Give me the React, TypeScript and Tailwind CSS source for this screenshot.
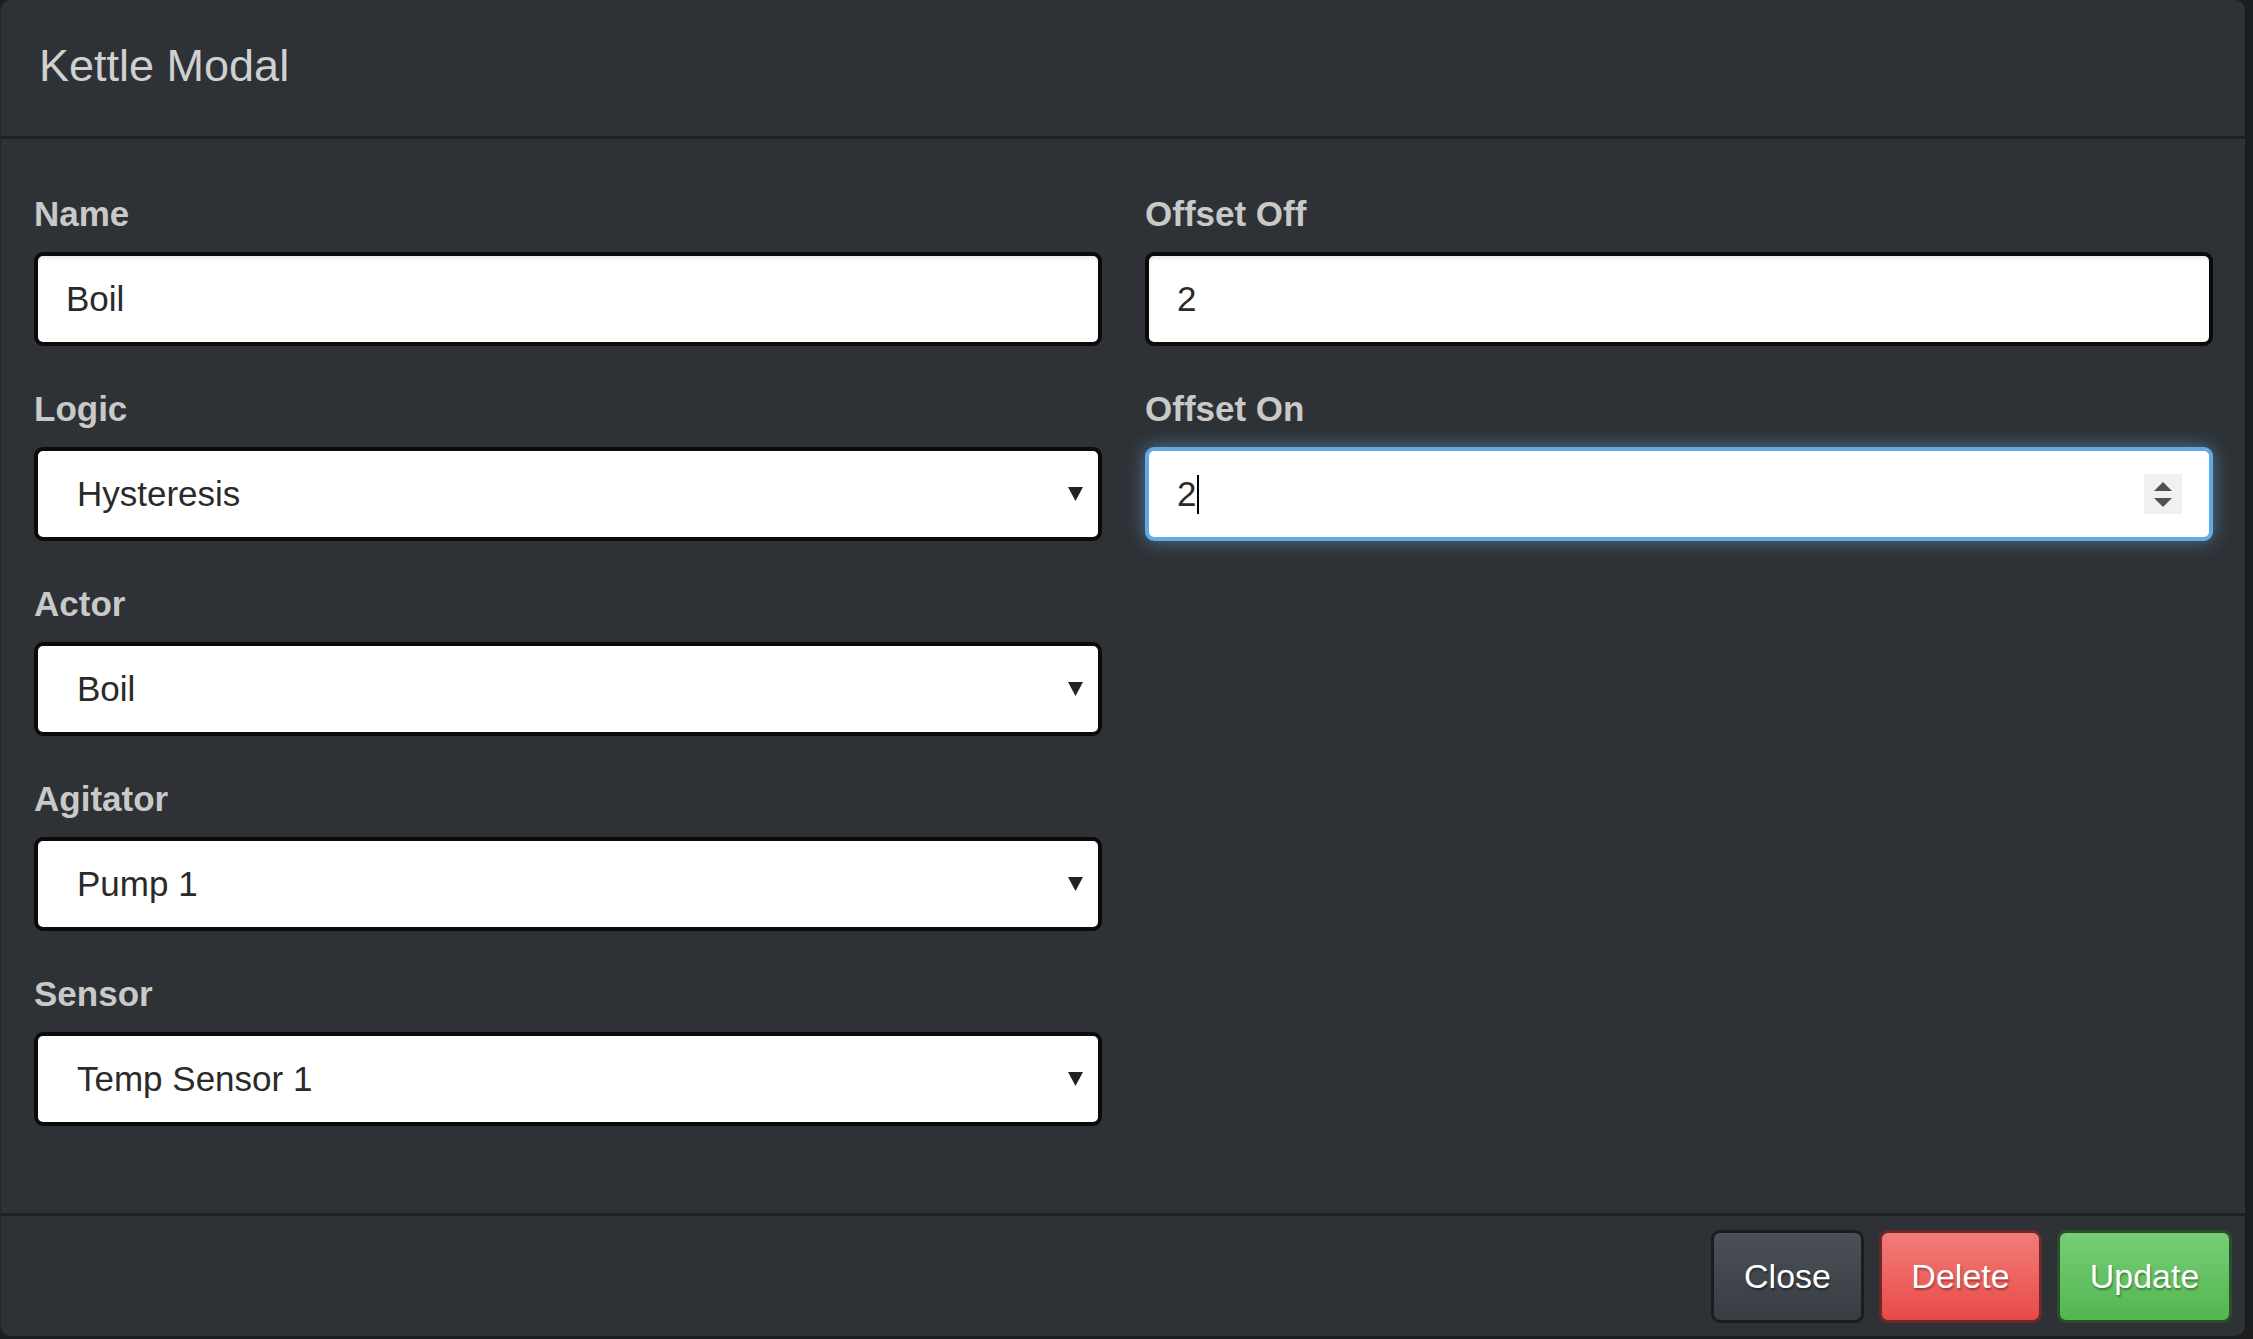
import React from 'react';

const FONT = '"Liberation Sans", Arial, Helvetica, sans-serif';

function Caret() {
  return (
    <svg width="15" height="14" viewBox="0 0 15 14" className="absolute right-[15px] top-1/2 -translate-y-1/2">
      <polygon points="0,0 15,0 7.5,14" fill="#222" />
    </svg>
  );
}

function Label({ children }: { children: React.ReactNode }) {
  return <div className="text-[35px] font-bold leading-[42px] text-[#c9c9c9]">{children}</div>;
}

function TextField({ label, value }: { label: string; value: string }) {
  return (
    <div>
      <Label>{label}</Label>
      <div className="mt-[17px] flex h-[94px] items-center rounded-[9px] border-[4px] border-[#0b0b0b] bg-white pl-[28px] text-[35px] text-[#2a2a2a] shadow-[inset_0_3px_3px_rgba(0,0,0,0.08)]">
        {value}
      </div>
    </div>
  );
}

function SelectField({ label, value }: { label: string; value: string }) {
  return (
    <div>
      <Label>{label}</Label>
      <div className="relative mt-[17px] flex h-[94px] items-center rounded-[9px] border-[4px] border-[#0b0b0b] bg-white pl-[39px] text-[35px] text-[#2a2a2a]">
        {value}
        <Caret />
      </div>
    </div>
  );
}

function FocusedNumberField({ label, value }: { label: string; value: string }) {
  return (
    <div>
      <Label>{label}</Label>
      <div className="relative mt-[17px] flex h-[94px] items-center rounded-[9px] border-[4px] border-[#62aae6] bg-white pl-[28px] text-[35px] text-[#2a2a2a] shadow-[0_0_18px_rgba(102,175,233,0.55)]">
        <span>{value}</span>
        <span className="ml-[1px] h-[39px] w-[2px] bg-black" />
        {/* spinner */}
        <div className="absolute right-[27px] top-1/2 flex h-[40px] w-[38px] -translate-y-1/2 flex-col items-center justify-center gap-[7px] bg-[#f0f0f0]">
          <svg width="18" height="9" viewBox="0 0 18 9">
            <polygon points="9,0 18,9 0,9" fill="#505050" />
          </svg>
          <svg width="18" height="9" viewBox="0 0 18 9">
            <polygon points="0,0 18,0 9,9" fill="#505050" />
          </svg>
        </div>
      </div>
    </div>
  );
}

export default function App() {
  return (
    <div className="h-[1339px] w-[2253px] overflow-hidden bg-[#1c1d1f]" style={{ fontFamily: FONT }}>
      <div className="flex h-[1336px] w-[2245px] flex-col rounded-[10px] border-l border-[#24272a] bg-[#2e3236]">
        {/* Header */}
        <div className="h-[139px] shrink-0 border-b-[3px] border-[#1f2225] pl-[38px] pt-[41px]">
          <h4 className="text-[45px] leading-[50px] text-[#d0d0d0]">Kettle Modal</h4>
        </div>

        {/* Body */}
        <div className="grid flex-1 grid-cols-2 gap-x-[43px] pl-[33px] pr-[32px] pt-[54px]">
          <div className="flex flex-col gap-[42px]">
            <TextField label="Name" value="Boil" />
            <SelectField label="Logic" value="Hysteresis" />
            <SelectField label="Actor" value="Boil" />
            <SelectField label="Agitator" value="Pump 1" />
            <SelectField label="Sensor" value="Temp Sensor 1" />
          </div>
          <div className="flex flex-col gap-[42px]">
            <TextField label="Offset Off" value="2" />
            <FocusedNumberField label="Offset On" value="2" />
          </div>
        </div>

        {/* Footer */}
        <div className="flex shrink-0 justify-end gap-[15px] border-t-[3px] border-[#1f2225] pb-[13px] pr-[13px] pt-[14px]">
          <button className="h-[93px] w-[153px] rounded-[9px] border-[3px] border-[#1a1c1f] bg-gradient-to-b from-[#4b4f57] to-[#393d43] text-[34px] text-white [text-shadow:1px_2px_2px_rgba(0,0,0,0.45)]">
            Close
          </button>
          <button className="h-[93px] w-[163px] rounded-[9px] border-[3px] border-[#6a2a29] bg-gradient-to-b from-[#f27b79] to-[#e84946] text-[34px] text-white [text-shadow:1px_2px_2px_rgba(0,0,0,0.35)]">
            Delete
          </button>
          <button className="h-[93px] w-[175px] rounded-[9px] border-[3px] border-[#2c4f2b] bg-gradient-to-b from-[#78cd78] to-[#51b74e] text-[34px] text-white [text-shadow:1px_2px_2px_rgba(0,0,0,0.35)]">
            Update
          </button>
        </div>
      </div>
    </div>
  );
}
